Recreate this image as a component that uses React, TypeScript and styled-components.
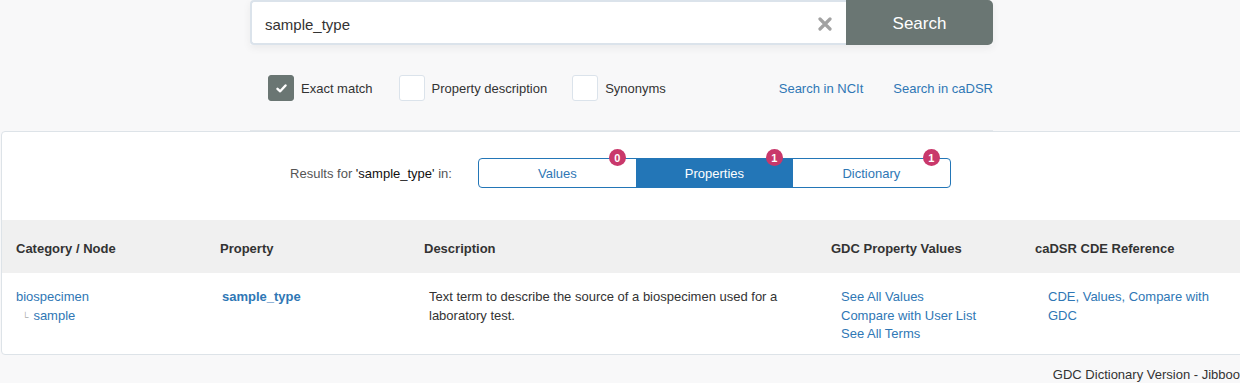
import styled, { createGlobalStyle } from "styled-components";

const GlobalStyle = createGlobalStyle`
    html, body {
        margin: 0;
        padding: 0;
        background-color: #f8f8f9;
        font-family: "Liberation Sans", Arial, sans-serif;
        color: #333;
        overflow: hidden;
    }
`

const Page = styled.div`
    width: 1240px;
    height: 383px;
    overflow: hidden;
`

const SearchArea = styled.div`
    width: 743px;
    margin-left: 250px;
    padding-bottom: 29px;
    border-bottom: 1px solid #e3e7eb;
`

const SearchBar = styled.div`
    display: flex;
    height: 45px;
    box-shadow: 0 3px 8px rgba(0, 0, 0, 0.06);
`

const InputBox = styled.div`
    flex: 1;
    display: flex;
    align-items: center;
    background: #fff;
    border: 2px solid #dbe3eb;
    border-right: none;
    border-radius: 4px 0 0 4px;
    padding: 3px 14px 0 13px;
    font-size: 15px;
    color: #333;
`

const InputText = styled.span`
    flex: 1;
`

const SearchButton = styled.div`
    width: 147px;
    display: flex;
    align-items: center;
    justify-content: center;
    padding-top: 3px;
    box-sizing: border-box;
    background: #6a7673;
    color: #fff;
    font-size: 17px;
    border-radius: 0 5px 5px 0;
`

const Options = styled.div`
    display: flex;
    align-items: center;
    margin-top: 30px;
    padding-left: 18px;
`

const Check = styled.div<{ $gap?: number }>`
    display: flex;
    align-items: center;
    margin-right: ${p => p.$gap || 25}px;
    font-size: 13px;
    color: #333;
`

const Box = styled.span<{ $on?: boolean }>`
    width: 26px;
    height: 26px;
    box-sizing: border-box;
    border-radius: 3px;
    border: 1px solid ${p => (p.$on ? "#6a7673" : "#dbe3eb")};
    background: ${p => (p.$on ? "#6a7673" : "#fff")};
    display: flex;
    align-items: center;
    justify-content: center;
    margin-right: 7px;
`

const Links = styled.div`
    margin-left: auto;
    display: flex;
    gap: 30px;
    font-size: 13px;
    color: #2f77b5;
`

const Panel = styled.div`
    width: 1244px;
    margin-left: 1px;
    background: #fff;
    border: 1px solid #dde3e8;
    border-radius: 4px;
    box-sizing: border-box;
`

const ResultsRow = styled.div`
    display: flex;
    align-items: center;
    justify-content: center;
    padding: 26px 0 32px 0;
    margin-left: -5px;
    font-size: 13px;
    color: #555;
`

const ResultsLabel = styled.span`
    margin-right: 26px;
    b {
        font-weight: normal;
        color: #111;
    }
`

const Tabs = styled.div`
    display: flex;
    border: 1px solid #2376b7;
    border-radius: 4px;
`

const Tab = styled.div<{ $active?: boolean }>`
    position: relative;
    width: 157px;
    height: 28px;
    display: flex;
    align-items: center;
    justify-content: center;
    font-size: 13px;
    color: ${p => (p.$active ? "#fff" : "#2f77b5")};
    background: ${p => (p.$active ? "#2376b7" : "transparent")};
`

const Badge = styled.span`
    position: absolute;
    top: -10px;
    right: 10px;
    width: 17px;
    height: 17px;
    border-radius: 50%;
    background: #c9386b;
    color: #fff;
    font-size: 11px;
    font-weight: bold;
    display: flex;
    align-items: center;
    justify-content: center;
`

const Grid = styled.div`
    display: grid;
    grid-template-columns: 204px 204px 407px 204px 1fr;
    padding-left: 14px;
`

const HeadRow = styled(Grid)`
    background: #f0f0f0;
    height: 53px;
    box-sizing: border-box;
    padding-top: 3px;
    align-items: center;
    font-size: 13px;
    font-weight: bold;
    color: #333;
`

const BodyRow = styled(Grid)`
    padding-top: 15px;
    padding-bottom: 10px;
    font-size: 13px;
    line-height: 18.5px;
`

const Cell = styled.div<{ $indent?: number; $right?: number }>`
    padding-left: ${p => p.$indent || 0}px;
    padding-right: ${p => p.$right || 0}px;
`

const A = styled.div<{ $bold?: boolean }>`
    color: #2f77b5;
    font-weight: ${p => (p.$bold ? "bold" : "normal")};
`

const Child = styled.div`
    color: #2f77b5;
    padding-left: 6px;
    span {
        color: #aaa;
        font-size: 9px;
        margin-right: 5px;
    }
`

const Footer = styled.div`
    text-align: right;
    font-size: 13px;
    color: #333;
    margin-top: 11px;
    line-height: 18px;
    white-space: nowrap;
`

export default function App() {
    return (
        <Page>
            <GlobalStyle />
            <SearchArea>
                <SearchBar>
                    <InputBox>
                        <InputText>sample_type</InputText>
                        <svg width="14" height="14" viewBox="0 0 14 14">
                            <path d="M2 2L12 12M12 2L2 12" stroke="#a2a2a2" strokeWidth="3.2" strokeLinecap="round" />
                        </svg>
                    </InputBox>
                    <SearchButton>Search</SearchButton>
                </SearchBar>
                <Options>
                    <Check $gap={26}>
                        <Box $on>
                            <svg width="11" height="9" viewBox="0 0 11 9">
                                <path d="M1.5 4.8L4.2 7.3L9.5 1.5" stroke="#fff" strokeWidth="2.4" fill="none" strokeLinecap="round" strokeLinejoin="round" />
                            </svg>
                        </Box>
                        Exact match
                    </Check>
                    <Check $gap={25}>
                        <Box />
                        Property description
                    </Check>
                    <Check>
                        <Box />
                        Synonyms
                    </Check>
                    <Links>
                        <span>Search in NCIt</span>
                        <span>Search in caDSR</span>
                    </Links>
                </Options>
            </SearchArea>
            <Panel>
                <ResultsRow>
                    <ResultsLabel>Results for <b>'sample_type'</b> in:</ResultsLabel>
                    <Tabs>
                        <Tab>Values<Badge>0</Badge></Tab>
                        <Tab $active>Properties<Badge>1</Badge></Tab>
                        <Tab>Dictionary<Badge>1</Badge></Tab>
                    </Tabs>
                </ResultsRow>
                <HeadRow>
                    <div>Category / Node</div>
                    <div>Property</div>
                    <div>Description</div>
                    <div>GDC Property Values</div>
                    <div>caDSR CDE Reference</div>
                </HeadRow>
                <BodyRow>
                    <Cell>
                        <A>biospecimen</A>
                        <Child><span>└</span>sample</Child>
                    </Cell>
                    <Cell $indent={2}>
                        <A $bold>sample_type</A>
                    </Cell>
                    <Cell $indent={5} $right={30}>
                        Text term to describe the source of a biospecimen used for a laboratory test.
                    </Cell>
                    <Cell $indent={10}>
                        <A>See All Values</A>
                        <A>Compare with User List</A>
                        <A>See All Terms</A>
                    </Cell>
                    <Cell $indent={13} $right={20}>
                        <A>CDE, Values, Compare with GDC</A>
                    </Cell>
                </BodyRow>
            </Panel>
            <Footer>GDC Dictionary Version - Jibboo</Footer>
        </Page>
    );
}
